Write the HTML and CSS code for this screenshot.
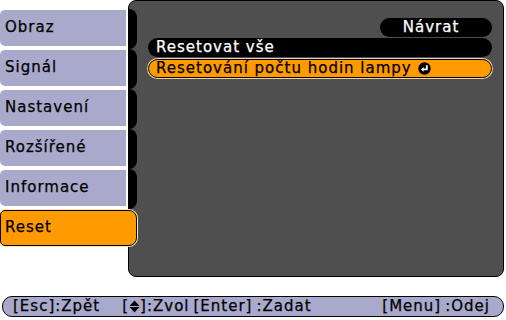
FILE: index.html
```html
<!DOCTYPE html>
<html lang="cs">

<head>
  <meta charset="UTF-8">
  <title>Reset</title>
  <link rel="stylesheet" href="styles.css">
</head>

<body>

  <div class="screen">
    <div class="tabs">
      <div class="tab">Obraz</div>
      <div class="tab">Signál</div>
      <div class="tab">Nastavení</div>
      <div class="tab">Rozšířené</div>
      <div class="tab">Informace</div>
      <div class="tab active">Reset</div>
    </div>

    <div class="panel">
      <div class="back-row">
        <div class="pill back">Návrat</div>
      </div>
      <div class="pill item">Resetovat vše</div>
      <div class="pill item selected">
        Resetování počtu hodin lampy
        <svg class="enter" width="13" height="13" viewBox="0 0 13 13">
          <circle cx="6.5" cy="6.5" r="6.2" fill="#000" />
          <path d="M8.8 3.2 V7.4 H4.6" fill="none" stroke="#fff" stroke-width="1.8" />
          <path d="M3 7.4 L5.6 5 V9.8 Z" fill="#fff" />
        </svg>
      </div>
    </div>
  </div>

  <!-- barra de ayuda -->
  <div class="help">
    <span class="key">[Esc]:Zpět</span>
    <span class="key gap">[<svg class="updown" width="11" height="13" viewBox="0 0 11 13">
        <path d="M5.5 0.5 L10.5 6 H0.5 Z M0.5 7 H10.5 L5.5 12.5 Z" fill="#000" />
      </svg>]:Zvol</span>
    <span class="key">[Enter]&thinsp;:Zadat</span>
    <span class="key right">[Menu]&thinsp;:Odej</span>
  </div>

</body>

</html>
```

FILE: styles.css
```css
body {
  margin: 0;
  background: #fff;
  font-family: "DejaVu Sans", sans-serif;
  font-size: 15px;
  letter-spacing: 1px;
  -webkit-text-stroke: 0.25px currentColor;
  color: #000;
  width: 506px;
  height: 320px;
  overflow: hidden;
}

.screen {
  display: flex;
  height: 277px;
}

.tabs {
  width: 126px;
  padding-top: 10px;
  display: flex;
  flex-direction: column;
  gap: 4px;
  margin-right: 2px;
}

.tab {
  position: relative;
  height: 36px;
  line-height: 34px;
  padding-left: 5px;
  background: #a9a9cb;
  border-radius: 5px 0 0 5px;
  box-sizing: border-box;
}

.tab::after {
  content: "";
  position: absolute;
  left: 128px;
  top: -1px;
  width: 9px;
  height: 40px;
  background: #000;
  border-radius: 0 8px 8px 0;
  z-index: 2;
}

.tab.active {
  background: #ff9a00;
  width: 137px;
  border: 1px solid #000;
  box-shadow: 0 0 0 1px #f4e6c0;
  border-radius: 5px 8px 8px 5px;
  z-index: 3;
  padding-left: 4px;
  line-height: 33px;
}

.tab.active::after {
  display: none;
}

.panel {
  flex: 1;
  margin-right: 2px;
  background: #4f4f4f;
  border: 1px solid #000;
  box-shadow: 0 0 0 1px #fff;
  border-radius: 8px;
  padding: 17px 11px 0 19px;
  display: flex;
  flex-direction: column;
  position: relative;
}

.back-row {
  display: flex;
  justify-content: flex-end;
}

.pill {
  height: 19px;
  line-height: 19px;
  border-radius: 10px;
  background: #000;
  color: #fff;
  box-sizing: border-box;
}

.back {
  width: 112px;
  text-align: center;
  padding-right: 10px;
}

.item {
  margin-top: 1px;
  padding-left: 8px;
}

.item.selected {
  background: #ff9a00;
  color: #000;
  border: 1px solid #000;
  box-shadow: 0 0 0 1px #e8d4a0;
  line-height: 17px;
  padding-left: 7px;
  height: 19px;
  margin-top: 2px;
  display: flex;
  align-items: center;
  gap: 6px;
}

.enter {
  display: block;
}

.help {
  margin: 19px 2px 0 2px;
  height: 21px;
  background: #a9a9cb;
  border: 1px solid #000;
  border-radius: 10px;
  box-sizing: border-box;
  display: flex;
  align-items: center;
  padding: 0 13px 0 10px;
  line-height: 19px;
  white-space: nowrap;
}

.key {
  margin-right: 4px;
}

.key.gap {
  margin-left: 18px;
}

.updown {
  vertical-align: -2px;
}

.right {
  margin-left: auto;
  margin-right: 0;
}
```
